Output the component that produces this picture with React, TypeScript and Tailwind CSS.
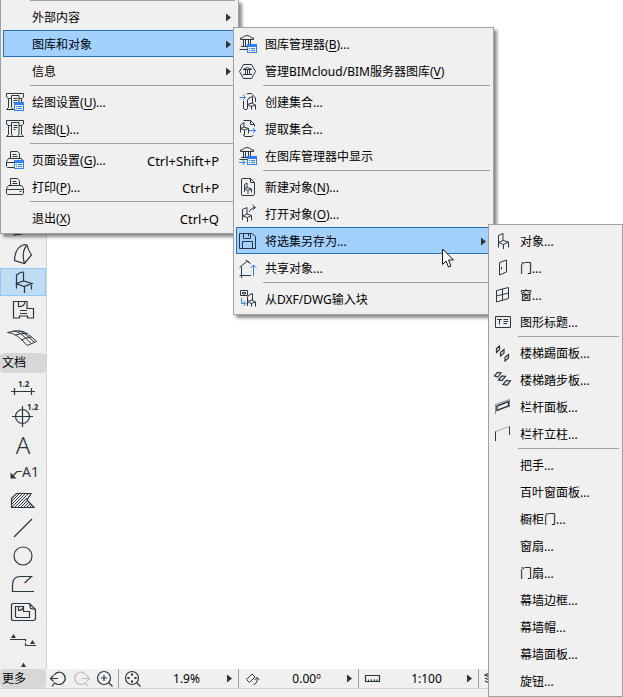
import React from "react";

const ink = "#2b3740";
const blue = "#2f7ff5";

type Entry = {
  label?: string;
  hotkey?: string;
  rest?: string;
  shortcut?: string;
  icon?: React.ReactNode;
  submenu?: boolean;
  active?: boolean;
};

// an entry with no label is drawn as a separator
const separator: Entry = {};

// Small pieces shared by several icons

const BlueList = () => (
  <g>
    <rect x="9.5" y="11.5" width="9" height="8" fill="#efefef" stroke={blue} />
    <path d="M9 11h10v3H9z" fill={blue} stroke="none" />
    <path d="M11 15.5h1M13 15.5h4M11 17.5h1M13 17.5h4" stroke={blue} />
  </g>
);

const Plotter = () => (
  <g>
    <path d="M6 7.5H3.5L1.5 6V2.5h17V6l-2 1.5H14" />
    <path d="M6.5 4.5h7.5v12l-1.5 2h-4.500l-1.5-2z" />
    <path d="M8.5 7.5h4M8.5 9.5h4M8.5 11.5h2M3.5 7.5v9L1.5 18.5H8M16.5 7.5v9l2 2H12" />
  </g>
);

const Printer = () => (
  <g>
    <path d="M5.5 9.5V2.5h7l2 2v5M7.5 5.5h4M7.5 7.5h5" />
    <path d="M1.5 13.5v-1l2-3h13l2 3v1zM1.5 13.5v4l1 1h15l1-1v-4M14.5 15.5h2" />
  </g>
);

const Temple = () => (
  <g>
    <path d="M2.5 6.5h13V5H14Q9 0 4 5H2.5zM5.5 6.5v7M7.5 6.5v7M10.5 6.5v5M12.5 6.5v5M3 13.5h6M1.5 16.5H9" />
  </g>
);

const Chair = () => (
  <path d="M5.5 17.5V5.5L10 3.5V10M5.5 12.5L10 10.5l5.5 1.5-5 2.5zM10.5 14.5V19M15.5 12v5.5" />
);

const SmallChair = () => (
  <path d="M9.5 18V9l1.5-2 3.5-1.5V12M9.5 13.5L14 12l3.5 2-4.5 1.5zM13.5 15.5v3M17.5 14v4.5" />
);

const Icon = ({ children }: { children: React.ReactNode }) => (
  <svg className="h-[21px] w-5 shrink-0 self-start" viewBox="0 0 20 21" fill="none" stroke={ink} aria-hidden="true">
    {children}
  </svg>
);

const fileMenu: Entry[] = [
  { label: "外部内容", submenu: true },
  { label: "图库和对象", submenu: true, active: true },
  { label: "信息", submenu: true },
  separator,
  { label: "绘图设置", hotkey: "U", rest: "...", icon: <><Plotter /><BlueList /></> },
  { label: "绘图", hotkey: "L", rest: "...", icon: <Plotter /> },
  separator,
  { label: "页面设置", hotkey: "G", rest: "...", shortcut: "Ctrl+Shift+P", icon: <><Printer /><BlueList /></> },
  { label: "打印", hotkey: "P", rest: "...", shortcut: "Ctrl+P", icon: <Printer /> },
  separator,
  { label: "退出", hotkey: "X", shortcut: "Ctrl+Q" },
];

const libraryMenu: Entry[] = [
  { label: "图库管理器", hotkey: "B", rest: "...", icon: <><Temple /><BlueList /></> },
  {
    label: "管理BIMcloud/BIM服务器图库",
    hotkey: "V",
    icon: (
      <>
        <path d="M1.5 11.5l4-7h8l4 7-4 7h-8z" />
        <path d="M5 9.5h9L9.5 7.5zM7.5 10v4M9.5 10v4M11.5 10v4M5 14.5h9" />
      </>
    ),
  },
  separator,
  {
    label: "创建集合...",
    icon: (
      <>
        <path d="M1.5 6.5h6M5 4l2.5 2.5L5 9" stroke={blue} />
        <path d="M8.5 3.5l1-1h4l4 4.5v4M5.5 10v7.5l1.5 1h2" />
        <SmallChair />
      </>
    ),
  },
  {
    label: "提取集合...",
    icon: (
      <>
        <path d="M5.5 2.5h7l4 4v2M12.5 2.5v4h4M5.5 16.5v1l1.5 1h7l1.5-1.5" />
        <path d="M2.5 14.5V7L6 4.5V9M2.5 10.5L6 9l4.5 1.5-4 1.5zM6.5 12v5M10.5 10.5v5" />
        <path d="M11 12.5h6.5M15 10l2.5 2.5L15 15" stroke={blue} />
      </>
    ),
  },
  {
    label: "在图库管理器中显示",
    icon: (
      <>
        <path d="M2.5 6.5h13V5H14Q9 0 4 5H2.5zM5.5 6.5v6M7.5 6.5v6M10.5 6.5v5M12.5 6.5v5M3 12.5h6M1.5 14.5H9" />
        <BlueList />
        <path d="M1 17.5h6M4.5 15L7 17.5 4.5 20" stroke={blue} />
      </>
    ),
  },
  separator,
  {
    label: "新建对象",
    hotkey: "N",
    rest: "...",
    icon: (
      <>
        <path d="M4 2.5h8.5l4 4V18l-1 1.5H4L3.5 19V3zM12.5 2.5v4h4" />
        <path d="M6.5 16V8.5L9 7v4.5M6.5 12.5l2.5-1 4.5 1.5-3.5 1.5zM10 14.5V18M13.5 13v3.5" />
      </>
    ),
  },
  {
    label: "打开对象",
    hotkey: "O",
    rest: "...",
    icon: (
      <>
        <path d="M4.5 17V6.5L9 4.5V11M4.5 13L9 11l4.5 1.5-4 2zM9.5 14.5V19M13.5 12.5v5" />
        <path d="M11.5 9Q12 5 17 4.5M14.5 2l3 2.5-3 2.5" />
      </>
    ),
  },
  {
    label: "将选集另存为...",
    submenu: true,
    active: true,
    icon: (
      <>
        <path d="M1.5 3.5H14l3.5 3v12h-16zM5.5 3.5v5h7v-5M10.5 4v2.5M4.5 18v-6.5h10V18" />
      </>
    ),
  },
  {
    label: "共享对象...",
    icon: (
      <>
        <path d="M1.5 10.5L9.5 4l3 2.5M7.5 3l4 3M3.5 9.5v9H13M1.5 18.5h2M3.5 18.5V21" />
        <path d="M15.5 19V8M12.5 11l3-3 3 3" stroke={blue} />
      </>
    ),
  },
  separator,
  {
    label: "从DXF/DWG输入块",
    icon: (
      <>
        <path d="M2.5 2.5h7v5h-7zM4.5 4.5h3v1.5h-3z" />
        <path d="M3.5 10v5.5H7M5.5 13L8 15.5 5.5 18" stroke={blue} />
        <SmallChair />
      </>
    ),
  },
];

const saveAsMenu: Entry[] = [
  { label: "对象...", icon: <Chair /> },
  { label: "门...", icon: <path d="M6.5 5.5l7-2.5v12l-7 3zM8.5 10v2.5" /> },
  { label: "窗...", icon: <path d="M3.5 6.5l12-3v11l-12 3.5zM3.5 12l12-3M9.5 5v11" /> },
  {
    label: "图形标题...",
    icon: <path d="M2.5 5.5h15v11h-15zM4 8.5h5M6.5 8.5v5M10.5 8.5H15M10.5 10.5H15M10.5 12.5H14" />,
  },
  separator,
  {
    label: "楼梯踢面板...",
    icon: <path d="M3.500 6.500l3-2.500v3.500l-3 3zM7.500 10.500l3.500-3V11l-3.500 3zM12 15.500l3.500-3V16L12 19z" strokeWidth="1.200" />,
  },
  {
    label: "楼梯踏步板...",
    icon: <path d="M1.500 7l3-3.500 3.500.5-3 4zM5.500 11l3.500-4 3.500.5-3.500 4zM10 15.500l3.500-4 4 .5-3.500 4z" strokeWidth="1.200" />,
  },
  {
    label: "栏杆面板...",
    icon: (
      <>
        <path d="M2.5 18V8.5l14-5v8" stroke="#8a9095" />
        <path d="M4 10l11.5-4.5V10L4 14.5z" strokeWidth="1.4" />
      </>
    ),
  },
  {
    label: "栏杆立柱...",
    icon: (
      <>
        <path d="M2.5 8.5l14-5" stroke="#a5aaad" />
        <path d="M2.5 18V8.5M16.5 3.5V12" />
      </>
    ),
  },
  separator,
  { label: "把手..." },
  { label: "百叶窗面板..." },
  { label: "橱柜门..." },
  { label: "窗扇..." },
  { label: "门扇..." },
  { label: "幕墙边框..." },
  { label: "幕墙帽..." },
  { label: "幕墙面板..." },
  { label: "旋钮..." },
];

const MenuList = ({ name, items }: { name: string; items: Entry[] }) => (
  <div role="menu" aria-label={name} className="flex flex-col">
    {items.map((item, idx) =>
      item.label ? (
        <button
          key={idx}
          role="menuitem"
          className={`flex h-[27px] items-center border pt-0.5 pr-1 pl-px text-left ${
            item.active ? "border-[#2a70b8] bg-[#a2d0ff]" : "border-transparent"
          }`}
        >
          <Icon>{item.icon}</Icon>
          <span className="ml-[7px] flex-1 whitespace-nowrap">
            {item.label}
            {item.hotkey && (
              <>
                (<u className="underline-offset-2">{item.hotkey}</u>)
              </>
            )}
            {item.rest}
          </span>
          {item.shortcut && <span className="mr-3 text-[13px]">{item.shortcut}</span>}
          {item.submenu && <Arrow />}
        </button>
      ) : (
        <div key={idx} role="separator" className="mr-px ml-[27px] h-1 pt-px">
          <div className="h-px bg-[#a0a0a0]" />
        </div>
      )
    )}
  </div>
);

const Arrow = () => (
  <svg className="h-[9px] w-[5px] shrink-0" viewBox="0 0 5 9" fill="#333" aria-hidden="true">
    <path d="M0 0.5L5 4.5 0 8.5z" />
  </svg>
);

const modelTools = [
  { name: "屋顶", icon: <path d="M4 23l9-1" /> },
  { name: "壳体", icon: <path d="M5.5 20.5Q6 7 15.5 4.500L18 5q1 5 4.500 10l-7 8.500zM18 5Q12 12 15.500 23.500" /> },
  {
    name: "对象",
    active: true,
    icon: <path d="M7.500 20.500V7q4-3 6.500-3l.5 1v8M7.500 15.500l7-2.500 8.500 2.500-8 3zM15.500 18.500V25M22.500 15.500v6" />,
  },
  {
    name: "区域",
    icon: <path d="M4.500 5.500h5v5q6 .5 6.500-5h2v7h6.500v9.500h-6v-2h-8v2h-6zM9.500 5.500h6M11 14.500h7M11 17.500h7" />,
  },
  {
    name: "网面",
    icon: (
      <path
        d="M-1.500 8.500Q7 5.500 14 7.500q4 1 13.500 10l-9.500 4Q8 9 -1.500 8.500M4.500 7Q11 7 22 19.500M9.500 6.500q5 1 15.500 11.500M6.500 11q6-2.500 12-1.500M12.500 16q5-3 10-3"
        strokeWidth="1"
      />
    ),
  },
];

const documentTools = [
  {
    name: "标注",
    icon: (
      <>
        <path d="M2 17.500h24M5.500 14v7M22.500 14v7" />
        <text x="9" y="13" fontSize="8" fontWeight="700" fill={ink} stroke="none">1.2</text>
      </>
    ),
  },
  {
    name: "标高标注",
    icon: (
      <>
        <circle cx="13.500" cy="14.500" r="7" />
        <path d="M3 14.500h21M13.500 4v21" />
        <text x="18" y="8" fontSize="8" fontWeight="700" fill={ink} stroke="none">1.2</text>
      </>
    ),
  },
  { name: "文本", icon: <text x="14" y="24" textAnchor="middle" fontSize="24" fontWeight="300" fill={ink} stroke="none">A</text> },
  {
    name: "标签",
    icon: (
      <>
        <path d="M4 18l4-4.500h5" />
        <path d="M1.500 20.500v-6l6 6z" fill={ink} stroke="none" />
        <text x="13" y="19" fontSize="14" fill={ink} stroke="none">A1</text>
      </>
    ),
  },
  {
    name: "填充",
    icon: (
      <>
        <path d="M3 15l7-7M3 18L13.500 7.500M3 21L16.500 7.500M6 21L19.500 7.500M9 21l9-9M12 21l6-6M15 21l4.500-4.500M18 21l3-3M21 21l2-2" strokeWidth="1" />
        <path d="M2.500 12.500l5-5H22L18 14l7 7.500H2.500z" />
      </>
    ),
  },
  { name: "线", icon: <path d="M5 23L23 5" /> },
  { name: "圆", icon: <circle cx="14" cy="14" r="9" /> },
  { name: "多义线", icon: <path d="M25 21.500H3.500V15q0-8.500 8-8.500h11L15.500 13" /> },
  {
    name: "图形",
    icon: (
      <>
        <path d="M3.500 5.500h17l6 6v9.500l-1.500 1.500H3.500l-1-1v-15zM20.500 5.500l1 5 5 1" />
        <path d="M6.500 8.500h8v5h6v6h-13l-1-1zM9.500 8.500v4q4 0 5-4" />
      </>
    ),
  },
  {
    name: "剖面",
    icon: (
      <>
        <path d="M1 13.500h15.500v2M16.500 17v2.500H27" />
        <path d="M4.500 8L7 12H2zM23.500 14l2.500 4h-5z" fill={ink} stroke="none" />
      </>
    ),
  },
  { name: "立面", icon: <path d="M14.500 8.500L17 13h-5z" fill={ink} stroke="none" /> },
];

const Tool = ({ name, icon, active }: { name: string; icon: React.ReactNode; active?: boolean }) => (
  <button
    aria-label={name}
    className={`flex h-7 shrink-0 justify-center border ${
      active ? "border-[#90c8f6] bg-[#c0dcf3]" : "border-transparent"
    }`}
  >
    <svg className="-mt-px h-7 w-8 shrink-0 overflow-visible" viewBox="-2 0 32 28" fill="none" stroke={ink} strokeWidth="1.2" aria-hidden="true">
      {icon}
    </svg>
  </button>
);

const BarIcon = ({ children, color = ink }: { children: React.ReactNode; color?: string }) => (
  <svg className="h-[18px] w-[18px] shrink-0" viewBox="0 0 18 18" fill="none" stroke={color} strokeWidth="1.2" aria-hidden="true">
    {children}
  </svg>
);

const views = [
  {
    name: "缩放",
    value: "1.9%",
    icon: (
      <>
        <circle cx="8" cy="8" r="6.500" />
        <path d="M12.500 12.500l4 4M8 3v3M8 10v3M3 8h3M10 8h3M7 4.500h2M7 11.500h2M4.500 7v2M11.500 7v2" />
      </>
    ),
  },
  {
    name: "方向",
    value: "0.00º",
    icon: <path d="M2.500 9.500L8 4l3 3-5.500 5.500zM9.500 14.500q4.500-1 3.500-7M10.500 10l2.500-2.500 2.500 2.500" strokeWidth="1" />,
  },
  {
    name: "比例",
    value: "1:100",
    icon: <path d="M1.500 5.500h14v6h-14zM4.500 11V9.500M7.500 11V9.500M10.500 11V9.500M13 11V9.500" />,
  },
];

const App = () => (
  <div className="relative flex h-screen flex-col overflow-hidden bg-white font-['Noto_Sans','Noto_Sans_CJK_SC',sans-serif] text-[12px] leading-[18px] text-black">
    <div className="flex min-h-0 flex-1">
      <aside className="flex w-[47px] flex-col overflow-hidden border-r border-[#d4d4d4] bg-[#efefef] pt-[212px]">
        {modelTools.map((tool) => (
          <Tool key={tool.name} {...tool} />
        ))}
        <h2 className="my-px h-5 shrink-0 rounded-sm bg-[#d7d7d7] pl-0.5 leading-5">文档</h2>
        {documentTools.map((tool) => (
          <Tool key={tool.name} {...tool} />
        ))}
      </aside>
      <main className="flex-1 bg-white" />
    </div>

    <footer className="bg-[#f0f0f0] pb-2">
      <div className="flex h-5 border-b border-[#cfcfcf]">
        <button className="w-[46px] rounded-sm bg-[#d7d7d7] pl-0.5 text-left">更多</button>
        <div className="flex w-[72px] items-center justify-between pr-1 pl-[3px]">
          <button aria-label="后退">
            <BarIcon>
              <path d="M5 5q4-5 9-1.500 4.500 5 0 9.500-4 3-8.500 0L3 16.500M1.500 8.500H9M4.500 5.500l-3 3 3 3" />
            </BarIcon>
          </button>
          <button aria-label="前进">
            <BarIcon color="#bdbdbd">
              <path d="M13 5Q9 0 4 3.500-.5 8.500 4 13q4 3 8.500 0l2.500 3.500M16.500 8.500H9M13.500 5.500l3 3-3 3" />
            </BarIcon>
          </button>
          <button aria-label="放大">
            <BarIcon>
              <circle cx="8" cy="8" r="6.500" />
              <path d="M12.500 12.500l4 4M5 8h6M8 5v6" />
            </BarIcon>
          </button>
        </div>
        {views.map((view) => (
          <button key={view.name} aria-label={view.name} className="flex w-[120px] shrink-0 items-center border-l border-[#a0a0a0] pr-[6px] pl-[5px]">
            <BarIcon>{view.icon}</BarIcon>
            <span className="flex-1 pl-1 text-center">{view.value}</span>
            <Arrow />
          </button>
        ))}
        <button aria-label="图层" className="flex items-center border-l border-[#a0a0a0] pl-[5px]">
          <BarIcon>
            <path d="M1 5l7-3 7 3-7 3zM1 8l7 3 7-3M1 11l7 3 7-3" />
          </BarIcon>
        </button>
      </div>
    </footer>

    <div className="absolute top-0 left-0 w-[239px] border border-t-0 border-[#a0a0a0] bg-[#f0f0f0] px-0.5 pb-0.5 shadow-[3px_3px_3px_rgba(0,0,0,0.45)]">
      <div className="mr-px ml-[27px] h-[3px]">
        <div className="h-px bg-[#a0a0a0]" />
      </div>
      <MenuList name="文件" items={fileMenu} />
    </div>

    <div className="absolute top-[27px] left-[233px] w-[261px] border border-[#a0a0a0] bg-[#f0f0f0] p-0.5 shadow-[3px_3px_3px_rgba(0,0,0,0.45)]">
      <MenuList name="图库和对象" items={libraryMenu} />
    </div>

    <div className="absolute top-[224px] left-[488px] w-[135px] border border-[#a0a0a0] bg-[#f0f0f0] p-0.5">
      <MenuList name="将选集另存为" items={saveAsMenu} />
    </div>

    {/* mouse pointer */}
    <svg className="absolute top-[248px] left-[442px] h-5 w-[13px]" viewBox="0 0 13 20" fill="#fff" stroke="#111" aria-hidden="true">
      <path d="M.5 1v15.500l3.500-3.500 2.500 6 2.500-1-2.500-6h5z" />
    </svg>
  </div>
);

export default App;
